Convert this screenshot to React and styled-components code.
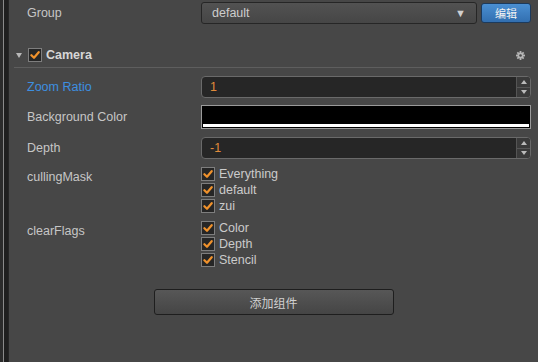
import React from 'react';
import styled, { createGlobalStyle } from 'styled-components';

const GlobalStyle = createGlobalStyle`
  html, body {
    margin: 0;
    padding: 0;
    background: #474747;
  }
  body {
    font-family: "Liberation Sans", Arial, "Noto Sans CJK SC", sans-serif;
    font-size: 12.5px;
    color: #cfcfcf;
  }
`

const Page = styled.div`
  display: flex;
  width: 538px;
  height: 362px;
  overflow: hidden;
  background: #474747;
`

const Gutter = styled.div`
  width: 3px;
  flex: none;
  background: #2b2b2b;
  border-right: 1px solid #8a8a8a;
  box-shadow: 4px 0 0 #1f1f1f, 5px 0 0 #262626;
  margin-right: 5px;
`

const Content = styled.div`
  flex: 1;
  display: flex;
  flex-direction: column;
  padding: 2px 7px 0 0;
`

const PropRow = styled.div`
  display: grid;
  grid-template-columns: 174px 1fr;
  align-items: ${p => (p.$top ? 'start' : 'center')};
  padding-left: 18px;
  margin-top: ${p => p.$mt || 0}px;
`

const Label = styled.div`
  color: ${p => (p.$active ? '#3d8fe0' : '#c6c6c6')};
  line-height: 22px;
  margin-top: ${p => p.$shift || 0}px;
`

const FieldLine = styled.div`
  display: flex;
  gap: 4px;
`

const Select = styled.div`
  flex: 1;
  height: 20px;
  display: flex;
  align-items: center;
  justify-content: space-between;
  padding: 0 10px;
  border: 1px solid #262626;
  border-radius: 3px;
  background: linear-gradient(#525252, #464646);
  color: #cdcdcd;
`

const Arrow = styled.span`
  color: #d0d0d0;
  font-size: 11px;
`

const BlueButton = styled.button`
  width: 50px;
  height: 20px;
  margin-top: 1px;
  border: 1px solid #1c3a5c;
  border-radius: 3px;
  background: linear-gradient(#4a8fd2, #326fb0);
  color: #f2f2f2;
  font-family: "Noto Sans CJK SC", sans-serif;
  font-size: 11px;
  padding: 0;
`

const Header = styled.div`
  display: flex;
  align-items: center;
  height: 24px;
  margin: 19px 0 0 5px;
  padding: 0 6px 0 0;
  border-bottom: 1px solid #5e5e5e;
`

const Triangle = styled.span`
  width: 0;
  height: 0;
  border-left: 3px solid transparent;
  border-right: 3px solid transparent;
  border-top: 5px solid #b8b8b8;
  margin: 0 6px 0 2px;
`

const Title = styled.span`
  font-weight: bold;
  color: #d6d6d6;
  margin-left: 4px;
  flex: 1;
`

const Box = styled.span`
  width: 12px;
  height: 12px;
  flex: none;
  display: inline-flex;
  align-items: center;
  justify-content: center;
  border: 1px solid #7e7e7e;
  background: #262626;
`

const NumberBox = styled.div`
  height: 20px;
  display: flex;
  border: 1px solid #6a6a6a;
  border-radius: 4px;
  background: #262626;
  overflow: hidden;
`

const Value = styled.div`
  flex: 1;
  padding-left: 8px;
  line-height: 20px;
  color: #e08b3b;
`

const Spinner = styled.div`
  width: 13px;
  display: flex;
  flex-direction: column;
  border-left: 1px solid #555;
  background: #3a3a3a;
`

const SpinHalf = styled.div`
  flex: 1;
  display: flex;
  align-items: center;
  justify-content: center;
  & + & {
    border-top: 1px solid #555;
  }
  &::after {
    content: '';
    border-left: 3px solid transparent;
    border-right: 3px solid transparent;
    ${p => (p.$down ? 'border-top: 4px solid #bbb;' : 'border-bottom: 4px solid #bbb;')}
  }
`

const ColorBox = styled.div`
  height: 21px;
  border: 1px solid #9a9a9a;
  background: #000;
  display: flex;
  flex-direction: column;
  justify-content: flex-end;
  padding: 0 1px 1px;
`

const AlphaBar = styled.div`
  height: 3px;
  background: #fff;
`

const CheckList = styled.div`
  display: flex;
  flex-direction: column;
  gap: 2px;
`

const CheckItem = styled.label`
  display: flex;
  align-items: center;
  gap: 4px;
  height: 14px;
  color: #cbcbcb;
`

const AddButton = styled.button`
  align-self: center;
  width: 240px;
  height: 26px;
  margin: 22px 0 0 7px;
  border: 1px solid #1e1e1e;
  border-radius: 3px;
  background: linear-gradient(#575757, #454545);
  color: #d0d0d0;
  font-family: "Noto Sans CJK SC", sans-serif;
  font-size: 12px;
`

const Check = ({ size = 10 }) => (
  <svg width={size} height={size} viewBox="0 0 10 10">
    <path d="M1.4 5.2 L4 7.8 L8.7 2.2" fill="none" stroke="#f0922c" strokeWidth="2.2" strokeLinecap="round" strokeLinejoin="round" />
  </svg>
)

const Gear = () => (
  <svg width="9" height="9" viewBox="0 0 10 10">
    <g fill="#b5b5b5">
      <circle cx="5" cy="5" r="3.3" />
      <rect x="4" y="0" width="2" height="10" />
      <rect x="0" y="4" width="10" height="2" />
      <rect x="4" y="0" width="2" height="10" transform="rotate(45 5 5)" />
      <rect x="4" y="0" width="2" height="10" transform="rotate(-45 5 5)" />
    </g>
    <circle cx="5" cy="5" r="1.4" fill="#474747" />
  </svg>
)

const Checked = ({ children }) => (
  <CheckItem>
    <Box><Check /></Box>
    {children}
  </CheckItem>
)

const NumberField = ({ value }) => (
  <NumberBox>
    <Value>{value}</Value>
    <Spinner>
      <SpinHalf />
      <SpinHalf $down />
    </Spinner>
  </NumberBox>
)

export default function App() {
  return (
    <Page>
      <GlobalStyle />
      <Gutter />
      <Content>
        <PropRow>
          <Label>Group</Label>
          <FieldLine>
            <Select>
              <span>default</span>
              <Arrow>▼</Arrow>
            </Select>
            <BlueButton>编辑</BlueButton>
          </FieldLine>
        </PropRow>

        <Header>
          <Triangle />
          <Box><Check /></Box>
          <Title>Camera</Title>
          <Gear />
        </Header>

        <PropRow $mt={8}>
          <Label $active>Zoom Ratio</Label>
          <NumberField value="1" />
        </PropRow>

        <PropRow $mt={7}>
          <Label>Background Color</Label>
          <ColorBox><AlphaBar /></ColorBox>
        </PropRow>

        <PropRow $mt={8}>
          <Label>Depth</Label>
          <NumberField value="-1" />
        </PropRow>

        <PropRow $mt={8} $top>
          <Label $shift={-1}>cullingMask</Label>
          <CheckList>
            <Checked>Everything</Checked>
            <Checked>default</Checked>
            <Checked>zui</Checked>
          </CheckList>
        </PropRow>

        <PropRow $mt={8} $top>
          <Label $shift={-1}>clearFlags</Label>
          <CheckList>
            <Checked>Color</Checked>
            <Checked>Depth</Checked>
            <Checked>Stencil</Checked>
          </CheckList>
        </PropRow>

        <AddButton>添加组件</AddButton>
      </Content>
    </Page>
  );
}
